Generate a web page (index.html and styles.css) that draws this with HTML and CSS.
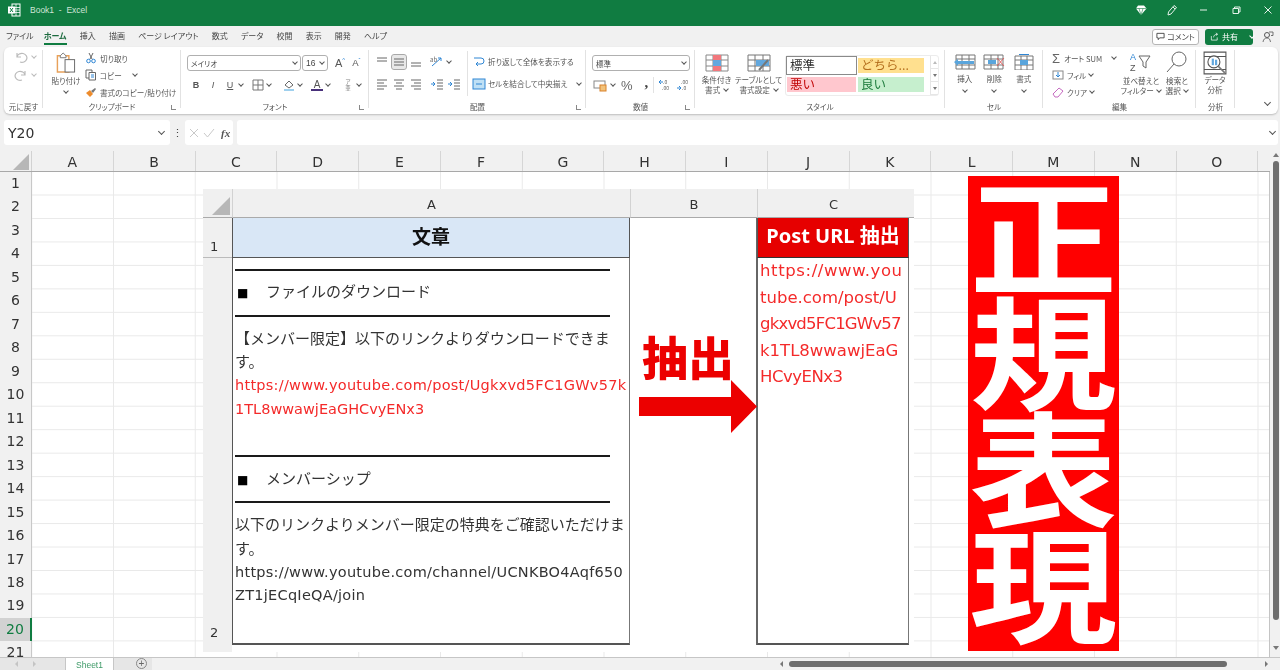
FILE: index.html
```html
<!DOCTYPE html>
<html lang="ja">
<head>
<meta charset="utf-8">
<title>Book1 - Excel</title>
<link rel="stylesheet" href="styles.css">
</head>
<body>
<div class="app">
  <header class="titlebar">
    <svg class="xl" viewBox="0 0 14 14"><rect x="5" y="1" width="8" height="12" fill="none" stroke="#fff"/><path d="M5 4.500h8M5 7h8M5 9.500h8M9 1v12" stroke="#fff" stroke-width=".8"/><rect x="1" y="3.500" width="7" height="7" fill="#fff"/><path d="M3 5l3 4M6 5l-3 4" stroke="#107c41"/></svg>
    <span class="doc">Book1&nbsp; -&nbsp; Excel</span>
    <span class="spacer"></span>
    <svg class="tb t1" viewBox="0 0 12 12"><path d="M3 1.500h6l2.500 3L6 11 1 4.500z" fill="#fff"/><path d="M1 4.500h10M4 4.500L6 11l2-6.500" stroke="#107c41" stroke-width=".6" fill="none"/></svg>
    <svg class="tb t2" viewBox="0 0 12 12"><path d="M2 11l.5-3L8 1.500l2.500 2L5 10z M7 3l2 2" stroke="#e6f2ea" fill="none"/></svg>
    <svg class="tb t3" viewBox="0 0 12 12"><path d="M2 6h7" stroke="#e6f2ea"/></svg>
    <svg class="tb t4" viewBox="0 0 12 12"><path d="M3 4.500h5.500v5H3zM4.500 4.500V3H10v5H8.500" stroke="#e6f2ea" fill="none"/></svg>
    <svg class="tb t5" viewBox="0 0 12 12"><path d="M2.500 2.500l7 7M9.500 2.500l-7 7" stroke="#e6f2ea"/></svg>
  </header>

  <nav class="tabs">
    <span class="tab tab-first">ファイル</span>
    <span class="tab active">ホーム</span>
    <span class="tab">挿入</span>
    <span class="tab">描画</span>
    <span class="tab">ページ レイアウト</span>
    <span class="tab">数式</span>
    <span class="tab">データ</span>
    <span class="tab">校閲</span>
    <span class="tab">表示</span>
    <span class="tab">開発</span>
    <span class="tab">ヘルプ</span>
    <span class="spacer"></span>
    <span class="comment-btn"><svg class="ic10" viewBox="0 0 10 10"><path d="M1 1.500h8v5H4L2.500 8.500v-2H1z" fill="none" stroke="#444"/></svg>コメント</span>
    <span class="share-btn"><svg class="ic10" viewBox="0 0 10 10"><path d="M1.500 4.500v4.500h6.500v-3M4 6c0-2 1.500-3.500 4-3.500M6.500 1L8.500 2.500 6.500 4" fill="none" stroke="#fff" stroke-width=".8"/></svg>共有<i class="cv cv-w"></i></span>
    <svg class="person" viewBox="0 0 12 12"><circle cx="5" cy="4" r="2.500" fill="none" stroke="#555"/><path d="M1 11c.5-3 2-4 4-4s3 1 3.500 4M7 1h4v3.500H9" fill="none" stroke="#555" stroke-width=".8"/></svg>
  </nav>

  <section class="ribbon">
    <div class="group g-undo">
      <div class="g-body col-tools">
        <div class="row"><svg class="ic14" viewBox="0 0 14 14"><path d="M3 7a5 4.500 0 1 1 3 5M3 3v4h4" fill="none" stroke="#bbb" stroke-width="1.200"/></svg><i class="cv cv-l"></i></div>
        <div class="row"><svg class="ic14" viewBox="0 0 14 14"><path d="M11 7a5 4.500 0 1 0-3 5M11 3v4H7" fill="none" stroke="#bbb" stroke-width="1.200"/></svg><i class="cv cv-l"></i></div>
      </div>
      <div class="g-label">元に戻す</div>
    </div>

    <div class="group g-clip">
      <div class="g-body">
        <div class="big big-paste">
          <svg class="paste" viewBox="0 0 20 22"><path d="M1 4h12v17H1z" fill="#fff" stroke="#e8a15a" stroke-width="1.500"/><path d="M4 4l3-3 3 3v2H4z" fill="#fff" stroke="#777"/><rect x="9" y="8" width="10" height="13" fill="#fff" stroke="#666"/></svg>
          <span class="big-t">貼り付け</span><i class="cv"></i>
        </div>
        <div class="clip-list">
          <div class="row"><svg class="ic12" viewBox="0 0 12 12"><path d="M4 1l3 6M8 1L5 7" stroke="#666"/><circle cx="3.500" cy="9" r="1.800" fill="none" stroke="#2f86d4"/><circle cx="8.500" cy="9" r="1.800" fill="none" stroke="#2f86d4"/></svg><span>切り取り</span></div>
          <div class="row"><svg class="ic12" viewBox="0 0 12 12"><path d="M1 1h6v8H1z" fill="#fff" stroke="#666"/><path d="M4 3.500h6.500V11H4z" fill="#fff" stroke="#666"/><path d="M6 6h3M6 8h3" stroke="#2f86d4"/></svg><span>コピー</span><i class="cv cv-far"></i></div>
          <div class="row"><svg class="ic12" viewBox="0 0 12 12"><path d="M1 7l4-3 3 4-3 3z" fill="#ed8b2c"/><path d="M6 5l4-3 1 1-3 4z" fill="#777"/></svg><span>書式のコピー/貼り付け</span></div>
        </div>
      </div>
      <div class="g-label">クリップボード<i class="launch"></i></div>
    </div>

    <div class="group g-font">
      <div class="g-body col-stack">
        <div class="row r1">
          <span class="sel sel-font">メイリオ<i class="cv"></i></span>
          <span class="sel sel-size">16<i class="cv"></i></span>
          <span class="grow-a">A<sup class="blue">^</sup></span>
          <span class="shrink-a">A<sup class="blue">ˇ</sup></span>
        </div>
        <div class="row r2">
          <b class="fmt fb">B</b><i class="fmt fi">I</i><u class="fmt fu">U</u><i class="cv"></i>
          <span class="vsep"></span>
          <svg class="ic14" viewBox="0 0 14 14"><path d="M2 2h10v10H2zM7 2v10M2 7h10" fill="none" stroke="#777"/></svg><i class="cv"></i>
          <span class="vsep vs2"></span>
          <svg class="ic14" viewBox="0 0 14 14"><path d="M3 7l4-4 4 4-4 3z" fill="none" stroke="#666"/><rect x="2" y="11" width="10" height="2" fill="#9fd0ee"/></svg><i class="cv"></i>
          <span class="font-color">A<em></em></span><i class="cv"></i>
          <span class="vsep vs3"></span>
          <span class="furi">ア<br>亜</span><i class="cv"></i>
        </div>
      </div>
      <div class="g-label">フォント<i class="launch"></i></div>
    </div>

    <div class="group g-align">
      <div class="g-body">
        <div class="al-grid">
          <div class="row al-row">
            <svg class="ic14" viewBox="0 0 14 14"><path d="M2 3h10M2 6h10" stroke="#666"/></svg>
            <svg class="ic14 on" viewBox="0 0 14 14"><path d="M2 4h10M2 7h10M2 10h10" stroke="#666"/></svg>
            <svg class="ic14" viewBox="0 0 14 14"><path d="M2 8h10M2 11h10" stroke="#666"/></svg>
            <span class="vsep"></span>
            <svg class="ic14" viewBox="0 0 14 14"><path d="M2 11L11 3M8 3h3v3" stroke="#2f86d4" fill="none"/><text x="0" y="7" font-size="6" fill="#666">ab</text></svg><i class="cv"></i>
          </div>
          <div class="row al-row">
            <svg class="ic14" viewBox="0 0 14 14"><path d="M2 3h10M2 6h7M2 9h10M2 12h7" stroke="#666"/></svg>
            <svg class="ic14" viewBox="0 0 14 14"><path d="M2 3h10M4 6h6M2 9h10M4 12h6" stroke="#666"/></svg>
            <svg class="ic14" viewBox="0 0 14 14"><path d="M2 3h10M5 6h7M2 9h10M5 12h7" stroke="#666"/></svg>
            <span class="vsep"></span>
            <svg class="ic14" viewBox="0 0 14 14"><path d="M7 3h6M7 6h6M7 9h6M7 12h6" stroke="#666"/><path d="M5 7H1M3 5l2 2-2 2" stroke="#2f86d4" fill="none"/></svg>
            <svg class="ic14" viewBox="0 0 14 14"><path d="M7 3h6M7 6h6M7 9h6M7 12h6" stroke="#666"/><path d="M1 7h4M3 5l2 2-2 2" stroke="#2f86d4" fill="none"/></svg>
          </div>
        </div>
        <span class="vline"></span>
        <div class="wrap-col">
          <div class="row"><svg class="ic14" viewBox="0 0 14 14"><path d="M2 3h7a3 3 0 0 1 0 6H4M6 7L4 9l2 2" fill="none" stroke="#2f86d4"/></svg><span>折り返して全体を表示する</span></div>
          <div class="row"><svg class="ic14" viewBox="0 0 14 14"><rect x="1" y="2" width="12" height="10" fill="#bfe0f5" stroke="#2f86d4"/><path d="M4 7h6" stroke="#2f86d4"/></svg><span>セルを結合して中央揃え</span><i class="cv cv-far"></i></div>
        </div>
      </div>
      <div class="g-label">配置<i class="launch"></i></div>
    </div>

    <div class="group g-num">
      <div class="g-body col-stack">
        <div class="row r1"><span class="sel sel-num">標準<i class="cv"></i></span></div>
        <div class="row r2 num-row">
          <svg class="ic14" viewBox="0 0 14 14"><rect x="1" y="3" width="11" height="7" fill="none" stroke="#888"/><rect x="7" y="7" width="6" height="6" fill="#f2c27a" stroke="#d9822b"/></svg><i class="cv"></i>
          <span class="pct">%</span><span class="comma">,</span>
          <span class="vsep"></span>
          <svg class="ic14" viewBox="0 0 14 14"><text x="5" y="6" font-size="5" fill="#666">.0</text><text x="4" y="12" font-size="5" fill="#666">.00</text><path d="M1 4h4M3 2L1 4l2 2" stroke="#2f86d4" fill="none"/></svg>
          <svg class="ic14" viewBox="0 0 14 14"><text x="5" y="6" font-size="5" fill="#666">.00</text><text x="6" y="12" font-size="5" fill="#666">.0</text><path d="M1 10h4M3 8l2 2-2 2" stroke="#2f86d4" fill="none"/></svg>
        </div>
      </div>
      <div class="g-label">数値<i class="launch"></i></div>
    </div>

    <div class="group g-style">
      <div class="g-body">
        <div class="big big-cf">
          <svg class="ic24" viewBox="0 0 24 18"><path d="M1 1h22v16H1zM1 6h22M1 12h22M8 1v16M16 1v16" fill="none" stroke="#888"/><rect x="8" y="1" width="8" height="5" fill="#f1777c"/><rect x="8" y="12" width="8" height="5" fill="#f1777c"/><rect x="8" y="6" width="8" height="6" fill="#62a7dd"/></svg>
          <span class="big-t">条件付き<br>書式 <i class="cv cv-in"></i></span>
        </div>
        <div class="big big-tb">
          <svg class="ic24" viewBox="0 0 24 18"><path d="M1 1h22v16H1zM1 6h22M1 12h22M8 1v16M16 1v16" fill="none" stroke="#777"/><rect x="9" y="6" width="13" height="6" fill="#62a7dd"/><path d="M12 16l9-10" stroke="#777" stroke-width="2"/></svg>
          <span class="big-t">テーブルとして<br>書式設定 <i class="cv cv-in"></i></span>
        </div>
        <div class="gallery">
          <div class="styles">
            <span class="st st-n">標準</span>
            <span class="st st-m">どちら...</span>
            <span class="st st-b">悪い</span>
            <span class="st st-g">良い</span>
          </div>
          <div class="gal-btns"><i class="gb"><i class="tri up"></i></i><i class="gb"><i class="tri"></i></i><i class="gb"><i class="tri"></i></i></div>
        </div>
      </div>
      <div class="g-label">スタイル</div>
    </div>

    <div class="group g-cells">
      <div class="g-body">
        <div class="big cell-btn"><svg class="ic22" viewBox="0 0 22 16"><path d="M2 1h19v14H2zM2 5h19M2 11h19M8 1v14M15 1v14" fill="none" stroke="#777"/><path d="M0 8l4-3v2h16v3H4v2z" fill="#5aa5dc"/></svg><span class="big-t">挿入</span><i class="cv"></i></div>
        <div class="big cell-btn"><svg class="ic22" viewBox="0 0 22 16"><path d="M1 1h19v14H1zM1 5h19M1 11h19M8 1v14M15 1v14" fill="none" stroke="#777"/><rect x="5" y="6" width="8" height="4" fill="#5aa5dc"/><path d="M14 4l7 8M21 4l-7 8" stroke="#e06060"/></svg><span class="big-t">削除</span><i class="cv"></i></div>
        <div class="big cell-btn"><svg class="ic22" viewBox="0 0 22 16"><path d="M2 2h18v14H2zM2 6h18M2 11h18M8 2v14M14 2v14" fill="none" stroke="#777"/><rect x="7" y="6" width="8" height="5" fill="#5aa5dc"/><path d="M6 .5h10" stroke="#2f86d4"/></svg><span class="big-t">書式</span><i class="cv"></i></div>
      </div>
      <div class="g-label">セル</div>
    </div>

    <div class="group g-edit">
      <div class="g-body">
        <div class="edit-list">
          <div class="row"><span class="sigma">Σ</span><span>オート SUM</span><i class="cv cv-far2"></i></div>
          <div class="row"><svg class="ic12" viewBox="0 0 12 12"><rect x="1" y="2" width="10" height="8" fill="#fff" stroke="#888"/><path d="M6 3v5M4 6l2 2 2-2" stroke="#2f86d4" fill="none"/></svg><span>フィル</span><i class="cv"></i></div>
          <div class="row"><svg class="ic12" viewBox="0 0 12 12"><path d="M1 8l6-6 4 3-5 6H3z" fill="#fff" stroke="#c56bc0"/></svg><span>クリア</span><i class="cv"></i></div>
        </div>
        <div class="big edit-big"><svg class="ic24" viewBox="0 0 24 22"><text x="1" y="9" font-size="9" fill="#2f86d4" font-family="Liberation Sans">A</text><text x="1" y="20" font-size="9" fill="#555" font-family="Liberation Sans">Z</text><path d="M10 5h11l-4 6v6l-3-2v-4z" fill="none" stroke="#666"/></svg><span class="big-t">並べ替えと<br>フィルター <i class="cv cv-in"></i></span></div>
        <div class="big edit-big"><svg class="ic24" viewBox="0 0 24 22"><circle cx="14" cy="8" r="7" fill="none" stroke="#666"/><path d="M9 13L2 21" stroke="#666"/></svg><span class="big-t">検索と<br>選択 <i class="cv cv-in"></i></span></div>
      </div>
      <div class="g-label">編集</div>
    </div>

    <div class="group g-data">
      <div class="g-body">
        <div class="big data-btn"><svg class="ic24" viewBox="0 0 22 22"><path d="M1 1h20v20H1zM1 5h20M1 17h20" fill="none" stroke="#555"/><circle cx="10" cy="10" r="5.500" fill="#fff" stroke="#555"/><rect x="8" y="7" width="2" height="6" fill="#62a7dd"/><rect x="11" y="8" width="2" height="5" fill="#62a7dd"/><path d="M14 14l6 6" stroke="#777" stroke-width="1.500"/></svg><span class="big-t">データ<br>分析</span></div>
      </div>
      <div class="g-label">分析</div>
    </div>
    <div class="collapse"><i class="cv cv-d"></i></div>
  </section>

  <section class="formula">
    <div class="namebox"><span>Y20</span><i class="cv cv-d"></i></div>
    <span class="dots">⋮</span>
    <div class="fx-box">
      <svg class="ic12" viewBox="0 0 12 12"><path d="M2 2l8 8M10 2l-8 8" stroke="#c9c9c9"/></svg>
      <svg class="ic12" viewBox="0 0 12 12"><path d="M1 6l3.500 4L11 2" fill="none" stroke="#c9c9c9"/></svg>
      <em>fx</em>
    </div>
    <div class="input"><i class="cv cv-d"></i></div>
  </section>

  <main class="sheet">
    <div class="col-head">
      <div class="corner"><svg class="corner-tri" viewBox="0 0 16 16"><path d="M16 0v16H0z" fill="#b7b7b7"/></svg></div>
      <span class="ch">A</span><span class="ch">B</span><span class="ch">C</span><span class="ch">D</span><span class="ch">E</span><span class="ch">F</span><span class="ch">G</span><span class="ch">H</span><span class="ch">I</span><span class="ch">J</span><span class="ch">K</span><span class="ch">L</span><span class="ch">M</span><span class="ch">N</span><span class="ch">O</span><span class="ch ch-last"></span>
    </div>
    <div class="sheet-body">
      <div class="row-head">
        <span>1</span><span>2</span><span>3</span><span>4</span><span>5</span><span>6</span><span>7</span><span>8</span><span>9</span><span>10</span><span>11</span><span>12</span><span>13</span><span>14</span><span>15</span><span>16</span><span>17</span><span>18</span><span>19</span><span class="cur">20</span><span>21</span>
      </div>
      <div class="cells"></div>

      <div class="shot">
        <div class="s-corner"><svg class="s-tri" viewBox="0 0 18 18"><path d="M18 0v18H0z" fill="#b7b7b7"/></svg></div>
        <div class="s-ch">A</div>
        <div class="s-ch">B</div>
        <div class="s-ch">C</div>
        <div class="s-pad"></div>

        <div class="s-rh rh1">1</div>
        <div class="hd-a">文章</div>
        <div class="cell-b span2"></div>
        <div class="hd-c">Post URL 抽出</div>
        <div class="s-pad"></div>

        <div class="s-rh rh2">2</div>
        <div class="body-a">
          <div class="ln rule"></div>
          <div class="ln jp"><span class="sq">■</span>ファイルのダウンロード</div>
          <div class="ln rule"></div>
          <div class="ln jp">【メンバー限定】以下のリンクよりダウンロードできま</div>
          <div class="ln jp">す。</div>
          <div class="ln red wide">https://www.youtube.com/post/Ugkxvd5FC1GWv57k</div>
          <div class="ln red">1TL8wwawjEaGHCvyENx3</div>
          <div class="ln"></div>
          <div class="ln rule"></div>
          <div class="ln jp"><span class="sq">■</span>メンバーシップ</div>
          <div class="ln rule"></div>
          <div class="ln jp">以下のリンクよりメンバー限定の特典をご確認いただけま</div>
          <div class="ln jp">す。</div>
          <div class="ln wide">https://www.youtube.com/channel/UCNKBO4Aqf650</div>
          <div class="ln wide">ZT1jECqIeQA/join</div>
        </div>
        <div class="body-c">
          <div class="c1">https://www.you</div>
          <div>tube.com/post/U</div>
          <div class="c3">gkxvd5FC1GWv57</div>
          <div>k1TL8wwawjEaG</div>
          <div class="c5">HCvyENx3</div>
        </div>
        <div class="s-pad"></div>
        <div class="s-foot"></div>
      </div>

      <div class="extract">
        <span>抽出</span>
        <svg class="arrow" viewBox="0 0 118 53"><path d="M0 17h92V0l26 26.500L92 53V36H0z" fill="#ec0000"/></svg>
      </div>

      <div class="banner"><span>正</span><span>規</span><span>表</span><span>現</span></div>
    </div>
    <div class="vscroll"><i class="tri up"></i><b></b><i class="tri"></i></div>
  </main>

  <footer class="bottom">
    <div class="nav-area"><i class="tri lft"></i><i class="tri rgt"></i></div>
    <div class="sheet-tab">Sheet1</div>
    <div class="add-area"><span class="add">+</span></div>
    <div class="hscroll"><i class="tri lft dark"></i><b></b><i class="tri rgt dark"></i></div>
  </footer>
</div>
</body>
</html>
```
FILE: styles.css
```css
* { box-sizing: border-box; }
html, body { margin: 0; padding: 0; }
body {
  width: 1280px; height: 670px; overflow: hidden; background: #f1f1f1;
  font-family: "Noto Sans CJK JP", "Noto Sans", sans-serif;
  font-feature-settings: "palt";
  color: #444;
}
i, em { font-style: normal; }
svg { display: block; flex: none; }
.app { width: 1280px; height: 670px; display: flex; flex-direction: column; filter: blur(.35px); }
.spacer { flex: 1; }
.row { display: flex; align-items: center; }

/* chevrons + triangles */
.cv { display: block; width: 4px; height: 4px; border-right: 1px solid #555; border-bottom: 1px solid #555; transform: rotate(45deg); flex: none; margin-top: -2px; }
.cv-w { border-color: #fff; margin-left: 9px; }
.cv-l { border-color: #bbb; margin-left: 4px; }
.cv-d { width: 5px; height: 5px; }
.cv-in { display: inline-block; margin: 0 0 2px 2px; }
.tri { display: block; width: 0; height: 0; border-left: 3px solid transparent; border-right: 3px solid transparent; border-top: 4px solid #777; }
.tri.up { border-top: 0; border-bottom: 4px solid #777; }
.tri.lft { border: 3px solid transparent; border-left: 0; border-right: 3px solid #c4c4c4; }
.tri.rgt { border: 3px solid transparent; border-right: 0; border-left: 3px solid #c4c4c4; }
.tri.dark.lft { border-right-color: #777; }
.tri.dark.rgt { border-left-color: #777; }

/* title bar */
.titlebar { height: 26px; background: #107c41; display: flex; align-items: center; padding: 0 0 6px 7px; flex: none; }
.xl { width: 14px; height: 14px; }
.doc { font: 8.500px "Liberation Sans", sans-serif; color: #cfe4d7; margin-left: 9px; }
.tb { width: 12px; height: 12px; }
.t1 { margin-right: 19px; }
.t2 { margin-right: 20px; }
.t3 { margin-right: 20px; }
.t4 { margin-right: 20px; }
.t5 { margin-right: 6px; }

/* tabs */
.tabs { height: 21px; display: flex; align-items: center; padding-left: 6px; flex: none; font-size: 8px; color: #444; }
.tab { margin-right: 13.200px; height: 21px; line-height: 20px; white-space: nowrap; }
.tab-first { margin-right: 10px; }
.tab.active { color: #1c6b3f; font-weight: 700; position: relative; }
.tab.active::after { content: ""; position: absolute; left: 0; right: 0; bottom: 2px; height: 2px; background: #107c41; }
.comment-btn { width: 47px; height: 16px; border: 1px solid #b5b5b5; border-radius: 3px; background: #fff; display: flex; align-items: center; justify-content: center; gap: 2px; margin-right: 6px; white-space: nowrap; }
.share-btn { width: 48px; height: 16px; border-radius: 3px; background: #107c41; color: #fff; display: flex; align-items: center; padding-left: 5px; gap: 3px; margin-right: 9px; white-space: nowrap; }
.ic10 { width: 9px; height: 9px; }
.person { width: 12px; height: 12px; margin-right: 6px; }

/* ribbon */
.ribbon { height: 67px; margin: 0 2px 0 4px; background: #fff; border-radius: 6px; display: flex; flex: none; box-shadow: 0 1px 2px rgba(0,0,0,.22); font-size: 7.600px; color: #555; }
.group { position: relative; display: flex; flex-direction: column; flex: none; }
.group::after { content: ""; position: absolute; right: 0; top: 3px; bottom: 6px; width: 1px; background: #e2e2e2; }
.g-body { height: 54px; display: flex; flex: none; }
.g-label { height: 13px; line-height: 12px; text-align: center; font-size: 7.600px; color: #555; position: relative; }
.launch { position: absolute; right: 5px; top: 4px; width: 5px; height: 5px; border-left: 1px solid #888; border-bottom: 1px solid #888; }
.big { display: flex; flex-direction: column; align-items: center; flex: none; }
.big-t { line-height: 10px; text-align: center; white-space: nowrap; }
.ic12 { width: 12px; height: 12px; }
.ic14 { width: 14px; height: 14px; }
.ic22 { width: 22px; height: 16px; }
.ic24 { width: 24px; height: 18px; }

.g-undo { width: 39px; }
.col-tools { flex-direction: column; gap: 3.500px; padding: 3px 0 0 10px; }
.g-clip { width: 138px; }
.big-paste { width: 32px; margin-left: 7px; padding-top: 5px; }
.paste { width: 20px; height: 21px; margin-bottom: 3px; }
.big-paste .cv { margin-top: 3px; }
.clip-list { display: flex; flex-direction: column; gap: 3px; margin-left: 3px; padding-top: 4px; }
.clip-list .row { height: 14px; gap: 3px; white-space: nowrap; }
.cv-far { margin-left: 8px; }

.g-font { width: 188px; }
.col-stack { flex-direction: column; padding: 8px 0 0 6px; }
.r1 { height: 16px; }
.r2 { height: 16px; margin-top: 6px; }
.sel { border: 1px solid #b0b0b0; border-radius: 3px; height: 16px; display: flex; align-items: center; padding: 0 3px; justify-content: space-between; color: #444; }
.sel-font { width: 114px; font-size: 7.500px; }
.sel-size { width: 26px; margin-left: 1px; font-family: "Liberation Sans", sans-serif; font-size: 8.500px; }
.grow-a { font: 11px "Liberation Sans", sans-serif; margin-left: 7px; }
.shrink-a { font: 9.500px "Liberation Sans", sans-serif; margin-left: 7px; }
.blue { color: #2f86d4; font-size: 6px; }
.fmt { width: 12px; text-align: center; font: 9px "Liberation Sans", sans-serif; color: #555; margin-right: 5px; }
.fb { font-weight: 700; margin-left: 3px; }
.fi { font-style: italic; }
.fu { margin-right: 3px; }
.vsep { width: 8px; flex: none; }
.vs2 { width: 11px; }
.vs3 { width: 13px; }
.g-font .r2 .ic14 { margin-right: 2px; }
.font-color { width: 12px; margin-left: 9px; font: 10px "Liberation Sans", sans-serif; text-align: center; position: relative; margin-right: 3px; }
.font-color em { display: block; height: 2px; background: #48307a; margin-top: -1px; }
.furi { font-size: 5.500px; line-height: 6px; width: 10px; text-align: center; margin-right: 4px; color: #888; }

.g-align { width: 217px; }
.g-align .g-body { padding: 7px 0 0 6px; }
.al-grid { width: 86px; display: flex; flex-direction: column; gap: 7px; }
.al-row { height: 15px; gap: 3px; }
.al-row .vsep { width: 1px; }
.on { background: #e8e8e8; outline: 1px solid #a8a8a8; border-radius: 2px; }
.vline { width: 1px; height: 45px; background: #e2e2e2; margin-left: 6px; margin-top: -3px; }
.wrap-col { display: flex; flex-direction: column; gap: 7px; margin-left: 4px; }
.wrap-col .row { height: 15px; gap: 2px; white-space: nowrap; }
.wrap-col .cv-far { margin-left: 8px; }

.g-num { width: 109px; }
.sel-num { width: 98px; font-size: 7.500px; }
.g-num .col-stack { padding: 8px 0 0 6px; }
.num-row { padding-left: 1px; }
.pct { font: 13px "Liberation Sans", sans-serif; margin-left: 6px; color: #666; }
.comma { font: 700 15px "Liberation Serif", serif; margin: -6px 0 0 12px; color: #444; }
.num-row .vsep { width: 5px; border-left: 1px solid #e2e2e2; height: 16px; margin-left: 5px; }
.num-row .ic14 { margin-right: 4px; }

.g-style { width: 250px; }
.g-style .g-body { padding: 7px 0 0 0; }
.big-cf { width: 43px; }
.big-tb { width: 41px; }
.big-cf .big-t, .big-tb .big-t { margin-top: 3px; }
.gallery { display: flex; margin-left: 6px; margin-top: 1px; width: 154px; height: 41px; border: 1px solid #ececec; border-radius: 3px; }
.styles { display: grid; grid-template-columns: 71px 68px; width: 143px; grid-template-rows: 21px 18px; }
.st { font-size: 12.500px; line-height: 14px; padding-left: 3px; height: 15px; margin: 2px 1px 0 1px; white-space: nowrap; font-feature-settings: normal; }
.st-n { height: 19px; margin: 0; border: 1px solid #8a8a8a; color: #333; line-height: 15px; }
.st-m { background: #ffe08f; color: #b5701f; }
.st-b { background: #ffc7ce; color: #c00000; margin-top: 0; }
.st-g { background: #c6efce; color: #1b7a3a; margin-top: 0; }
.gal-btns { display: flex; flex-direction: column; border-left: 1px solid #e6e6e6; margin-left: 1px; flex: 1; }
.gb { flex: 1; display: flex; align-items: center; justify-content: center; border-bottom: 1px solid #e6e6e6; }
.gb .tri { border-left-width: 2.500px; border-right-width: 2.500px; border-top-width: 3px; }
.gb .tri.up { border-bottom: 3px solid #bbb; border-top: 0; }

.g-cells { width: 98px; }
.g-cells .g-body { padding: 7px 0 0 5px; }
.cell-btn { width: 29.500px; }
.cell-btn .big-t { margin-top: 4px; }
.cell-btn .cv { margin-top: 4px; }

.g-edit { width: 153px; }
.g-edit .g-body { padding-top: 4px; }
.edit-list { width: 80px; padding: 0 0 0 9px; display: flex; flex-direction: column; gap: 3px; }
.edit-list .row { height: 14px; gap: 3px; white-space: nowrap; }
.sigma { font: 13px "Liberation Sans", sans-serif; color: #666; width: 9px; }
.cv-far2 { margin-left: 7px; }
.edit-big { width: 36px; }
.edit-big .big-t { margin-top: 3px; line-height: 10px; }
.edit-big .ic24 { height: 22px; }

.g-data { width: 39px; }
.data-btn { width: 38px; padding-top: 4px; }
.data-btn .ic24 { width: 24px; height: 24px; }
.data-btn .big-t { margin-top: 0; }
.collapse { flex: 1; display: flex; align-items: flex-end; justify-content: flex-end; padding: 0 8px 9px 0; }

/* formula bar */
.formula { height: 25px; margin: 6px 2px 0 4px; display: flex; align-items: stretch; flex: none; }
.namebox { width: 166px; background: #fff; border-radius: 3px; display: flex; align-items: center; justify-content: space-between; padding: 0 6px 0 4px; font: 14px "DejaVu Sans", sans-serif; color: #333; }
.dots { width: 15px; text-align: center; line-height: 24px; font-size: 11px; }
.fx-box { width: 48px; background: #fff; border-radius: 3px; display: flex; align-items: center; padding-left: 3px; gap: 3px; }
.fx-box em { font: italic 700 11px "Liberation Serif", serif; color: #555; margin-left: 3px; }
.input { flex: 1; margin-left: 4px; background: #fff; border-radius: 3px; display: flex; align-items: center; justify-content: flex-end; padding-right: 3px; }

/* sheet */
.sheet { position: relative; margin-top: 6px; flex: 1; padding-right: 10px; display: flex; flex-direction: column; min-height: 0; }
.col-head { height: 21px; display: flex; border-bottom: 1px solid #a8a8a8; flex: none; }
.corner { width: 32px; border-right: 1px solid #d2d2d2; display: flex; justify-content: flex-end; padding: 3px 2px 0 0; flex: none; }
.corner-tri { width: 16px; height: 16px; }
.ch { width: 81.750px; flex: none; text-align: center; font: 14px/22px "DejaVu Sans", sans-serif; color: #333; border-right: 1px solid #d6d6d6; }
.ch-last { width: 13px; }
.sheet-body { position: relative; flex: 1; display: flex; overflow: hidden; }
.row-head { width: 32px; flex: none; display: flex; flex-direction: column; border-right: 1px solid #c8c8c8; }
.row-head span { height: 23.470px; flex: none; text-align: center; font: 14px/23px "DejaVu Sans", sans-serif; color: #333; }
.row-head .cur { background: #d2d2d2; color: #107c41; border-right: 2px solid #107c41; margin-right: -1px; }
.cells {
  flex: 1; background-color: #fff;
  background-image: linear-gradient(to right, #e9e9e9 1px, transparent 1px), linear-gradient(to bottom, #e9e9e9 1px, transparent 1px);
  background-size: 81.750px 100%, 100% 23.470px;
  background-position: 81px 0, 0 22.500px;
  border-right: 1px solid #c4c4c4;
}

/* pasted table picture */
.shot {
  position: absolute; left: 203px; top: 17px; width: 711px; height: 463px;
  background: #f0f0f0; color: #333;
  display: grid; grid-template-columns: 29px 398px 127px 152px 5px; grid-template-rows: 29px 40px 387px 7px;
  font-family: "DejaVu Sans", "Noto Sans CJK JP", sans-serif; font-feature-settings: normal;
}
.s-corner { border-bottom: 1px solid #aaa; display: flex; justify-content: flex-end; padding: 8px 2px 0 0; background: #f0f0f0; }
.s-tri { width: 18px; height: 18px; }
.s-ch { background: #f0f0f0; text-align: center; font-size: 13px; line-height: 31px; border-bottom: 1px solid #aaa; border-left: 1px solid #d2d2d2; }
.s-pad { background: #fff; }
.shot > .s-pad:nth-child(5) { background: #f0f0f0; border-bottom: 1px solid #aaa; }
.s-rh { background: #f0f0f0; font-size: 13px; padding-left: 7px; display: flex; align-items: flex-end; padding-bottom: 5px; }
.rh1 { border-bottom: 1px solid #bbb; padding-bottom: 3px; }
.hd-a { background: #d9e7f6; border: 1px solid #555; border-top: 0; text-align: center; font: 700 19px/36px "Noto Sans CJK JP", sans-serif; color: #111; }
.cell-b { background: #fff; grid-row: span 2; }
.span2 { border-right: 1px solid #666; }
.hd-c { background: #e60000; color: #fff; font: 700 20px/36px "Noto Sans", "Noto Sans CJK JP", sans-serif; text-align: center; border-left: 1px solid #555; border-right: 1px solid #555; border-bottom: 1px solid #333; white-space: nowrap; }
.body-a { background: #fff; border-left: 1px solid #555; border-right: 1px solid #777; border-bottom: 2px solid #555; padding: 0 0 0 2px; font-size: 14.500px; color: #333; }
.ln { height: 23.300px; line-height: 23.300px; white-space: nowrap; position: relative; }
.jp { font-size: 15px; }
.wide { letter-spacing: .26px; }
.rule::before { content: ""; position: absolute; left: -.5px; width: 375.500px; top: 10.500px; height: 2px; background: #1a1a1a; }
.red { color: #f42a2a; }
.sq { display: inline-block; width: 31px; padding-left: 2px; font-size: 12px; color: #000; }
.body-c { grid-column: 4; grid-row: 3; background: #fff; border-left: 1px solid #666; border-right: 1px solid #777; border-bottom: 2px solid #555; padding-left: 2px; font-size: 16.500px; line-height: 26.500px; color: #f42a2a; white-space: nowrap; }
.c1 { letter-spacing: .6px; }
.c3 { letter-spacing: -.8px; }
.c5 { letter-spacing: -.5px; }
.s-foot { grid-column: 1 / -1; background: linear-gradient(to right, #f0f0f0 29px, #fff 29px); }

.extract { position: absolute; left: 639px; top: 160px; width: 118px; display: flex; flex-direction: column; }
.extract span { font: 900 46px/46px "Noto Sans CJK JP", sans-serif; color: #ec0000; margin-left: 3px; white-space: nowrap; }
.arrow { width: 118px; height: 53px; margin-top: 2px; }

.banner { position: absolute; left: 968px; top: 4px; width: 151px; height: 475px; background: #ff0000; display: flex; flex-direction: column; align-items: center; color: #fff; }
.banner span { height: 116px; line-height: 110px; font-size: 148px; font-weight: 700; transform: scaleY(.84); }

.vscroll { position: absolute; right: 0; top: 0; bottom: 0; width: 10px; background: #f1f1f1; display: flex; flex-direction: column; align-items: center; padding: 2px 0 2px 2px; }
.vscroll b { width: 6px; height: 459px; background: #6e6e6e; border-radius: 3px; margin: 4px 0 26px; }

/* bottom */
.bottom { height: 13px; border-top: 1px solid #c6c6c6; display: flex; flex: none; background: #f1f1f1; }
.nav-area { width: 66px; background: #e6e6e6; display: flex; align-items: center; gap: 15px; padding-left: 15px; border-right: 1px solid #c6c6c6; }
.sheet-tab { width: 48px; background: #fff; color: #3e9a68; font: 8.500px/14px "Liberation Sans", sans-serif; text-align: center; border-right: 1px solid #c6c6c6; }
.add-area { width: 38px; background: #e6e6e6; display: flex; justify-content: flex-end; padding-right: 5px; }
.add { width: 11px; height: 11px; border: 1px solid #888; border-radius: 50%; font: 10px/9px "Liberation Sans", sans-serif; text-align: center; color: #666; }
.hscroll { margin-left: 628px; flex: 1; display: flex; align-items: center; padding-right: 11px; }
.hscroll b { width: 438px; height: 6px; border-radius: 3px; background: #6e6e6e; margin: 0 38px 0 6px; }
```
